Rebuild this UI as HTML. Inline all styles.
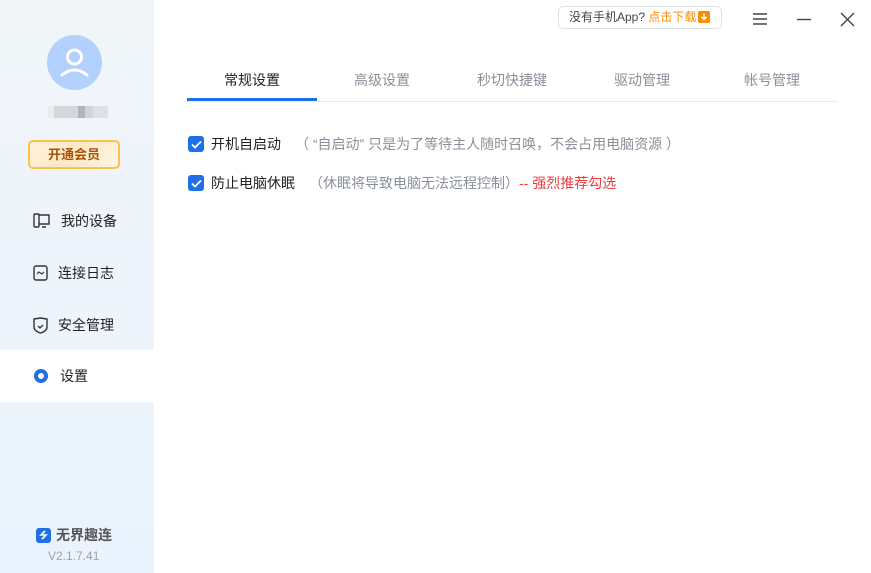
<!DOCTYPE html>
<html><head><meta charset="utf-8">
<style>
*{margin:0;padding:0;box-sizing:border-box}
body{width:871px;height:573px;overflow:hidden;background:#fff;font-family:"Liberation Sans","Noto Sans CJK SC",sans-serif;position:relative}
.side{position:absolute;left:0;top:0;width:154px;height:573px;background:linear-gradient(#f1f5f8,#edf4fc 60%,#eaf3fd)}
.avatar{position:absolute;left:47px;top:35px;width:55px;height:55px;border-radius:50%;background:#b3d1fc}
.blur{position:absolute;left:48px;top:106px;height:12px;width:60px;background:linear-gradient(90deg,#e9ecef 0 10%,#d3d6da 10% 50%,#b0b3b7 50% 62%,#d0d3d7 62% 75%,#dde1e5 75%)}
.vip{position:absolute;left:28px;top:140px;width:92px;height:29px;border:2px solid #fcc24a;border-radius:5px;background:linear-gradient(135deg,#fff4dc,#fde9c4 50%,#fff6e6);color:#a8530c;font-size:13px;font-weight:bold;text-align:center;line-height:25px}
.item{position:absolute;left:0;width:154px;height:52px;display:flex;align-items:center;padding-left:33px;font-size:14px;color:#222}
.item svg{margin-right:10px}
.item.act{background:#fff}
.logo{position:absolute;left:36px;top:525px;font-size:14px;color:#555;display:flex;align-items:center;font-weight:bold}
.ver{position:absolute;left:48px;top:549px;font-size:12px;color:#9aa1aa}
.pill{position:absolute;left:558px;top:6px;width:164px;height:23px;border:1px solid #dcdfe4;border-radius:5px;font-size:12px;color:#444;line-height:21px;padding-left:10px}
.pill b{font-weight:normal;color:#fb8c00}
.tabs{position:absolute;left:187px;top:62px;width:651px;height:40px;border-bottom:1px solid #e6e8eb}
.tab{position:absolute;top:8px;font-size:14px;color:#8a9099}
.tab.act{color:#222}
.ul{position:absolute;left:0;top:36px;width:130px;height:3px;background:#1f6fe8}
.opt{position:absolute;left:188px;font-size:14px;color:#222;display:flex;align-items:center;white-space:pre}
.cb{width:16px;height:16px;border-radius:3px;background:#1f6fe8;margin-right:7px;display:flex;align-items:center;justify-content:center}
.g{color:#8a9099;margin-left:14px}
.r{color:#f03b3b}
</style></head><body>
<div class="side">
<div class="avatar"><svg width="55" height="55" viewBox="0 0 55 55"><circle cx="27.5" cy="22" r="7" fill="none" stroke="#fff" stroke-width="3"/><path d="M15 40 Q27.5 30 40 40" fill="none" stroke="#fff" stroke-width="3" stroke-linecap="round"/></svg></div>
<div class="blur"></div>
<div class="vip">开通会员</div>
<div class="item" style="top:195px"><svg width="18" height="16" viewBox="0 0 18 16"><rect x="1" y="1" width="5" height="13" rx="1" fill="none" stroke="#333" stroke-width="1.4"/><path d="M6 2H16V11H6M9 14H13" fill="none" stroke="#333" stroke-width="1.4"/></svg>我的设备</div>
<div class="item" style="top:247px"><svg width="15" height="16" viewBox="0 0 15 16"><rect x="1" y="1" width="13" height="14" rx="2" fill="none" stroke="#333" stroke-width="1.4"/><path d="M4 9L6 7L9 9L11 7" fill="none" stroke="#333" stroke-width="1.2"/></svg>连接日志</div>
<div class="item" style="top:299px"><svg width="15" height="17" viewBox="0 0 15 17"><path d="M1 2L7.5 1L14 2V10Q14 14 7.5 16Q1 14 1 10Z" fill="none" stroke="#333" stroke-width="1.4"/><path d="M5 9L7 11L10 8" fill="none" stroke="#333" stroke-width="1.3"/></svg>安全管理</div>
<div class="item act" style="top:350px"><svg width="16" height="16" viewBox="0 0 16 16" style="margin-right:11px"><circle cx="8" cy="8" r="5" fill="none" stroke="#1f6fe8" stroke-width="4"/></svg>设置</div>
<div class="logo"><svg width="15" height="15" viewBox="0 0 15 15" style="margin-right:5px"><rect width="15" height="15" rx="3" fill="#1f6fe8"/><path d="M9 3L5 7H10L6 11" fill="none" stroke="#fff" stroke-width="1.6"/></svg>无界趣连</div>
<div class="ver">V2.1.7.41</div>
</div>
<div class="pill">没有手机App? <b>点击下载</b><svg width="12" height="12" viewBox="0 0 12 12" style="vertical-align:-2px;margin-left:2px"><rect width="12" height="12" rx="2" fill="#fb8c00"/><path d="M6 2.5V8M3.5 6L6 8.5L8.5 6" fill="none" stroke="#fff" stroke-width="1.5"/></svg></div>
<svg style="position:absolute;left:752px;top:12px" width="16" height="14"><path d="M1 2H15M1 7H15M1 12H15" stroke="#444" stroke-width="1.4"/></svg>
<svg style="position:absolute;left:796px;top:12px" width="16" height="14"><path d="M1 7.5H15" stroke="#444" stroke-width="1.4"/></svg>
<svg style="position:absolute;left:840px;top:12px" width="15" height="15"><path d="M1 1L14 14M14 1L1 14" stroke="#444" stroke-width="1.4"/></svg>
<div class="tabs">
<div class="tab act" style="left:37px">常规设置</div>
<div class="tab" style="left:167px">高级设置</div>
<div class="tab" style="left:290px">秒切快捷键</div>
<div class="tab" style="left:427px">驱动管理</div>
<div class="tab" style="left:557px">帐号管理</div>
<div class="ul"></div>
</div>
<div class="opt" style="top:134px"><div class="cb"><svg width="11" height="9"><path d="M1 4.5L4 7.5L10 1.5" fill="none" stroke="#fff" stroke-width="1.8"/></svg></div>开机自启动<span class="g">（ “自启动” 只是为了等待主人随时召唤，不会占用电脑资源 ）</span></div>
<div class="opt" style="top:173px"><div class="cb"><svg width="11" height="9"><path d="M1 4.5L4 7.5L10 1.5" fill="none" stroke="#fff" stroke-width="1.8"/></svg></div>防止电脑休眠<span class="g">（休眠将导致电脑无法远程控制）</span><span class="r">-- 强烈推荐勾选</span></div>
</body></html>
